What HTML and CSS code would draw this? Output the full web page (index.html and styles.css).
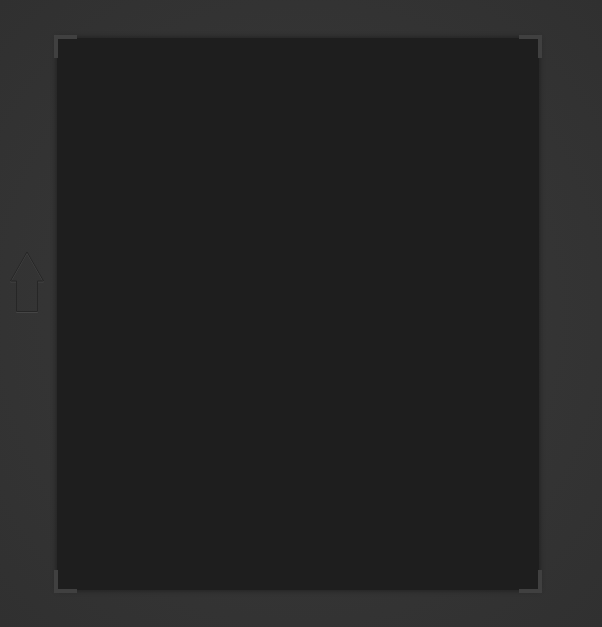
FILE: index.html
```html
<!DOCTYPE html>
<html lang="en">
<head>
  <meta charset="UTF-8" />
  <title>Drop Area</title>
  <link rel="stylesheet" href="styles.css">
</head>
<body>
  <div class="stage">
    <div class="side">
      <svg class="up-arrow" width="36" height="62" viewBox="0 0 36 62">
        <path d="M18 1 L34.5 30 L28.5 30 L28.5 60.5 L7.5 60.5 L7.5 30 L1.5 30 Z" fill="none" stroke="#454545" stroke-width="1" transform="translate(0,1)"/>
        <path d="M18 1 L34.5 30 L28.5 30 L28.5 60.5 L7.5 60.5 L7.5 30 L1.5 30 Z" fill="none" stroke="#262626" stroke-width="1"/>
      </svg>
    </div>
    <div class="sheet">
      <span class="corner tl"></span>
      <span class="corner tr"></span>
      <span class="corner bl"></span>
      <span class="corner br"></span>
    </div>
  </div>
</body>
</html>
```

FILE: styles.css
```css
body {
  margin: 0;
  padding: 0;
  background: #353535;
  font-family: "Liberation Sans", Arial, sans-serif;
}
.stage {
  width: 602px;
  height: 627px;
  display: flex;
  padding-top: 38px;
  box-sizing: border-box;
  background: radial-gradient(ellipse at 50% 50%, #383838 0%, #343434 60%, #303030 100%);
}
.side {
  width: 57px;
  position: relative;
}
.up-arrow {
  position: absolute;
  left: 9px;
  top: 213px;
}
.sheet {
  width: 482px;
  height: 552px;
  background: #1e1e1e;
  position: relative;
  box-shadow: 0 0 6px rgba(0,0,0,0.45);
}
.corner {
  position: absolute;
  width: 19px;
  height: 19px;
  border-color: #404040;
  border-style: solid;
  border-width: 0;
}
.corner.tl {
  left: -3px;
  top: -3px;
  border-left-width: 4px;
  border-top-width: 4px;
}
.corner.tr {
  right: -3px;
  top: -3px;
  border-right-width: 4px;
  border-top-width: 4px;
}
.corner.bl {
  left: -3px;
  bottom: -3px;
  border-left-width: 4px;
  border-bottom-width: 4px;
}
.corner.br {
  right: -3px;
  bottom: -3px;
  border-right-width: 4px;
  border-bottom-width: 4px;
}
```
